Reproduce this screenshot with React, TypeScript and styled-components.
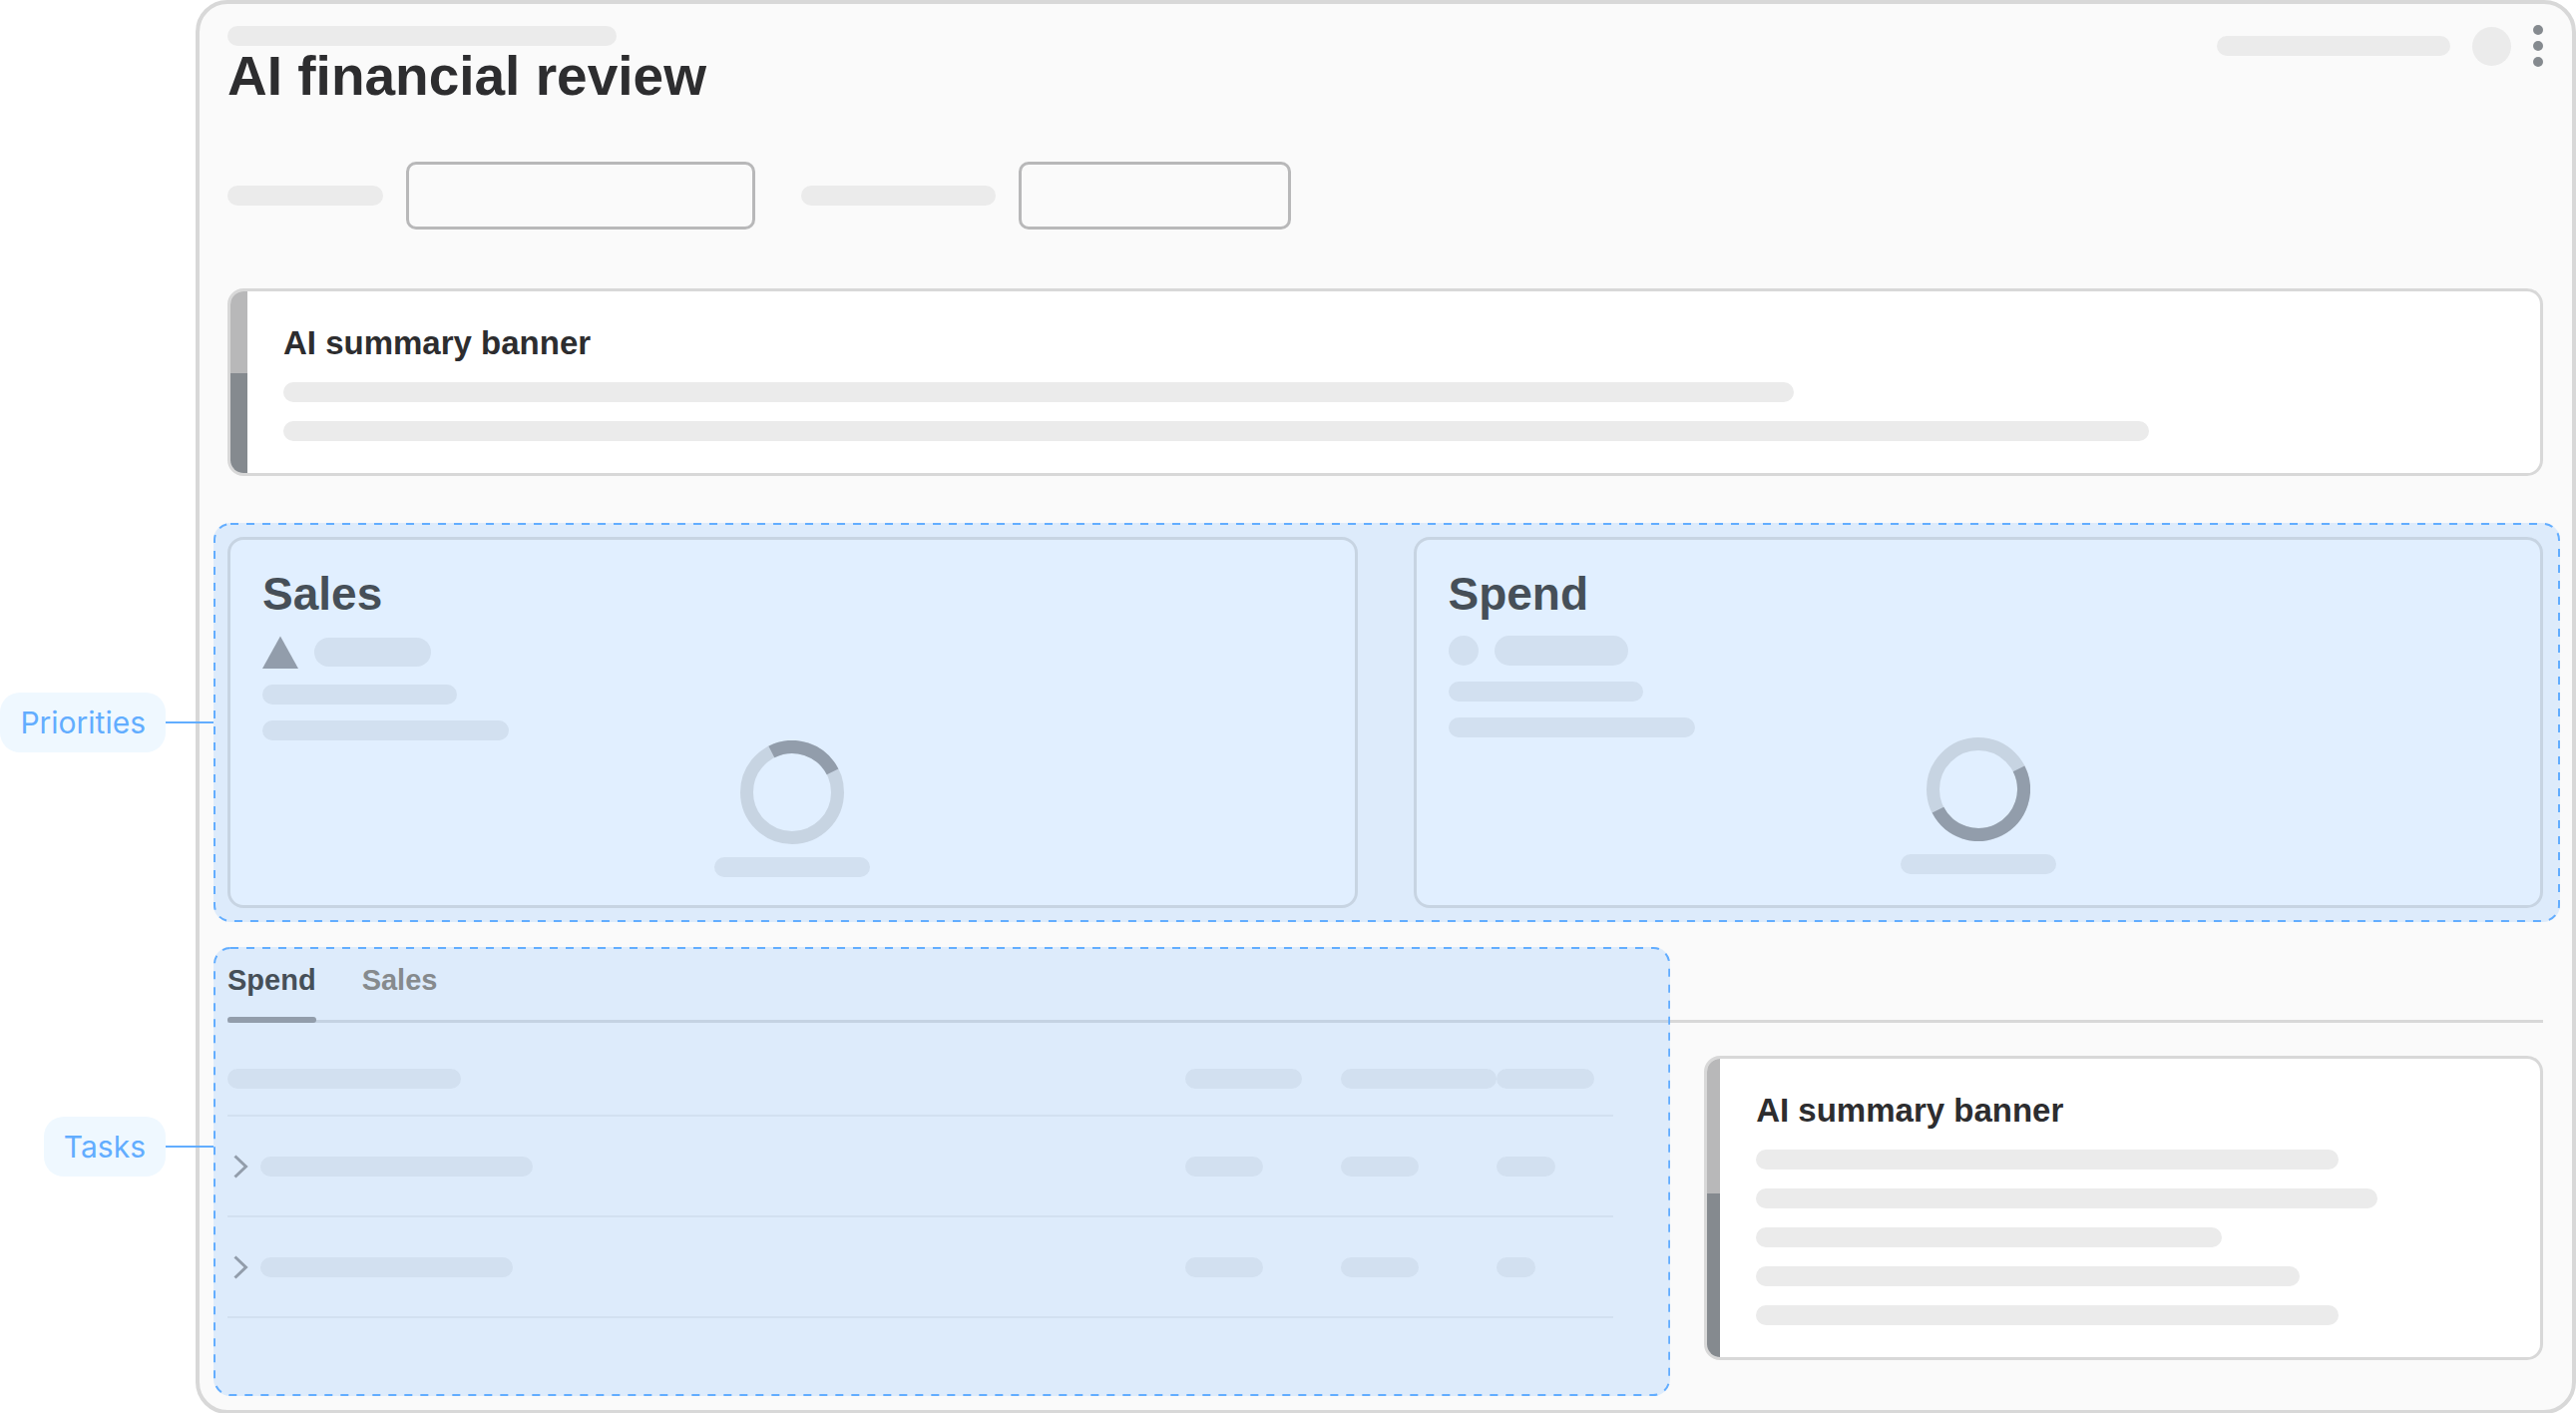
import React, { useState } from "react";
import styled, { createGlobalStyle } from "styled-components";

const color = {
  frame: "#fafafa",
  border: "#d8d8d8",
  field: "#b8b8b9",
  bar: "#ebebeb",
  text: "#2d2d2f",
  strong: "#858a8f",
  warmText: "#302a20",
  warmMark: "#96928f",
  warmLine: "#dddbd9",
  muted: "#867867",
  accent: "#62adff",
  accentSoft: "#eff8ff",
  tint: "rgba(135, 191, 255, 0.25)",
};

const GlobalStyle = createGlobalStyle`
  *, *::before, *::after { box-sizing: border-box; }
  body {
    margin: 0;
    background: #ffffff;
    color: ${color.text};
    font-family: "Liberation Sans", Arial, sans-serif;
  }
  button, input { font: inherit; color: inherit; }
  h1, h2 { margin: 0; font-weight: 700; }
`;

const Page = styled.div`
  padding-left: 196px;
`;

const Frame = styled.main`
  padding: 22px 29px 14px 28px;
  border: 4px solid ${color.border};
  border-radius: 32px;
  background: ${color.frame};
`;

const Bar = styled.span<{ $w: number; $h?: number }>`
  display: block;
  flex: none;
  width: ${(p) => p.$w}px;
  max-width: 100%;
  height: ${(p) => p.$h ?? 20}px;
  border-radius: 16px;
  background: ${color.bar};
`;

const Dot = styled.span<{ $size: number }>`
  flex: none;
  width: ${(p) => p.$size}px;
  height: ${(p) => p.$size}px;
  border-radius: 50%;
  background: ${color.bar};
`;

const Header = styled.header`
  display: flex;
  align-items: flex-start;
  justify-content: space-between;
`;

const PageTitle = styled.h1`
  font-size: 55px;
  line-height: 60px;
`;

const Account = styled.div`
  display: flex;
  align-items: center;
  gap: 22px;
`;

const MenuButton = styled.button`
  display: flex;
  padding: 0;
  border: 0;
  background: none;
  cursor: pointer;
  svg { overflow: visible; fill: ${color.strong}; }
`;

const Filters = styled.form`
  display: flex;
  align-items: center;
  gap: 46px;
  margin-top: 56px;
`;

const Field = styled.label`
  display: flex;
  align-items: center;
  gap: 23px;
`;

const TextBox = styled.input<{ $w: number }>`
  width: ${(p) => p.$w}px;
  height: 68px;
  padding: 0 16px;
  border: 3px solid ${color.field};
  border-radius: 10px;
  background: transparent;
  font-size: 29px;
`;

const Card = styled.section`
  border: 3px solid ${color.border};
  border-radius: 16px;
  background: #ffffff;
`;

const BannerCard = styled(Card)`
  display: flex;
  overflow: hidden;
`;

const Stripe = styled.div<{ $w: number }>`
  flex: none;
  width: ${(p) => p.$w}px;
  background: linear-gradient(${color.field} 45%, ${color.strong} 45%);
`;

const BannerBody = styled.div`
  display: flex;
  flex: 1;
  flex-direction: column;
  gap: 19px;
  min-width: 0;
  padding: 32px 36px;
`;

const BannerTitle = styled.h2`
  font-size: 33px;
  line-height: 40px;
`;

const TopBanner = styled.div`
  margin-top: 59px;
`;

const Priorities = styled.div`
  position: relative;
  display: grid;
  grid-template-columns: 1fr 1fr;
  gap: 56px;
  margin: 47px -17px 0 -14px;
  padding: 14px 17px 14px 14px;
`;

const MetricCard = styled(Card)`
  display: flex;
  flex-direction: column;
  gap: 16px;
  min-height: 372px;
  padding: 28px 32px;
  border-color: ${color.warmLine};
`;

const MetricTitle = styled.h2`
  color: ${color.warmText};
  font-size: 46px;
  line-height: 52px;
`;

const Status = styled.div`
  display: flex;
  align-items: center;
  gap: 16px;
`;

const Chart = styled.div`
  display: flex;
  flex-direction: column;
  align-items: center;
  gap: 13px;
  margin-top: -16px;
`;

const Workspace = styled.div`
  position: relative;
  display: grid;
  grid-template-columns: minmax(0, 1.72fr) minmax(0, 1fr);
  grid-template-rows: auto auto;
  column-gap: 34px;
  margin-top: 25px;
`;

const Tabs = styled.div`
  grid-column: 1 / -1;
  grid-row: 1;
  display: flex;
  gap: 46px;
  padding-top: 15px;
  box-shadow: inset 0 -3px ${color.border};
`;

const Tab = styled.button<{ $active: boolean }>`
  padding: 0;
  border: 0;
  background: none;
  color: ${(p) => (p.$active ? color.warmText : color.muted)};
  font-size: 29px;
  font-weight: 700;
  line-height: 36px;
  cursor: pointer;
  &::after {
    content: "";
    display: block;
    height: 6px;
    margin-top: 19px;
    border-radius: 3px;
    background: ${(p) => (p.$active ? color.warmMark : "transparent")};
  }
`;

const TaskPane = styled.div`
  grid-column: 1;
  grid-row: 2;
  padding: 19px 57px 78px 0;
`;

const TaskTable = styled.table`
  width: 100%;
  table-layout: fixed;
  border-collapse: separate;
  border-spacing: 0;
  th, td {
    height: 101px;
    padding: 0;
    border-bottom: 2px solid ${color.bar};
    vertical-align: middle;
  }
  th { height: 75px; }
`;

const Column = styled.col<{ $w?: number }>`
  width: ${(p) => (p.$w ? `${p.$w}px` : "auto")};
`;

const TaskName = styled.div`
  display: flex;
  align-items: center;
`;

const ExpandButton = styled.button`
  display: flex;
  width: 33px;
  padding: 0 0 0 6px;
  border: 0;
  background: none;
  cursor: pointer;
`;

const Aside = styled.aside`
  grid-column: 2;
  grid-row: 2;
  align-self: start;
  margin-top: 33px;
`;

const RegionCover = styled.div`
  position: absolute;
  inset: 0;
  pointer-events: none;
`;

const TaskCover = styled.div`
  position: relative;
  grid-column: 1;
  grid-row: 1 / 3;
  margin-left: -14px;
  pointer-events: none;
`;

const Outline = styled.svg`
  position: absolute;
  inset: 0;
  width: 100%;
  height: 100%;
  rect {
    x: 1px;
    y: 1px;
    width: calc(100% - 2px);
    height: calc(100% - 2px);
    fill: none;
    stroke: ${color.accent};
    stroke-width: 2;
    stroke-dasharray: 8 8;
  }
`;

const Tint = styled.div`
  position: absolute;
  inset: 0;
  border-radius: 17px;
  background: ${color.tint};
`;

const Callout = styled.div`
  position: absolute;
  top: 170px;
  right: 100%;
  display: flex;
  align-items: center;
  &::after {
    content: "";
    width: 48px;
    height: 2px;
    background: ${color.accent};
  }
`;

const CalloutLabel = styled.span`
  padding: 12px 20px;
  border-radius: 20px;
  background: ${color.accentSoft};
  color: ${color.accent};
  font-family: Inter, "Liberation Sans", sans-serif;
  font-size: 30px;
  line-height: 36px;
`;

function Highlight({ label }: { label: string }) {
  return (
    <>
      <Tint />
      <Outline aria-hidden="true">
        <rect rx="16" />
      </Outline>
      <Callout>
        <CalloutLabel>{label}</CalloutLabel>
      </Callout>
    </>
  );
}

function Banner({ stripe, lines }: { stripe: number; lines: number[] }) {
  return (
    <BannerCard>
      <Stripe $w={stripe} />
      <BannerBody>
        <BannerTitle>AI summary banner</BannerTitle>
        {lines.map((w, i) => (
          <Bar key={i} $w={w} />
        ))}
      </BannerBody>
    </BannerCard>
  );
}

function Ring({ share, start }: { share: number; start: number }) {
  return (
    <svg width="104" height="104" viewBox="0 0 104 104" fill="none" strokeWidth="13" aria-hidden="true">
      <circle cx="52" cy="52" r="45.5" stroke={color.warmLine} />
      <circle
        cx="52"
        cy="52"
        r="45.5"
        stroke={color.warmMark}
        pathLength={100}
        strokeDasharray={`${share} ${100 - share}`}
        transform={`rotate(${start - 90} 52 52)`}
      />
    </svg>
  );
}

function Metric(props: {
  title: string;
  icon: React.ReactNode;
  status: React.ReactNode;
  share: number;
  start: number;
}) {
  return (
    <MetricCard>
      <MetricTitle>{props.title}</MetricTitle>
      <Status>
        {props.icon}
        {props.status}
      </Status>
      <Bar $w={195} />
      <Bar $w={247} />
      <Chart>
        <Ring share={props.share} start={props.start} />
        <Bar $w={156} />
      </Chart>
    </MetricCard>
  );
}

const tasks = [
  { name: 273, cells: [78, 78, 59] },
  { name: 253, cells: [78, 78, 39] },
];

export default function App() {
  const [tab, setTab] = useState("Spend");
  return (
    <>
      <GlobalStyle />
      <Page>
        <Frame>
          <Header>
            <div>
              <Bar $w={390} />
              <PageTitle>AI financial review</PageTitle>
            </div>
            <Account>
              <Bar $w={234} />
              <Dot $size={39} />
              <MenuButton type="button" aria-label="More options">
                <svg width="10" height="40" viewBox="0 0 10 40">
                  <circle cx="5" cy="4" r="5" />
                  <circle cx="5" cy="20" r="5" />
                  <circle cx="5" cy="36" r="5" />
                </svg>
              </MenuButton>
            </Account>
          </Header>

          <Filters>
            <Field>
              <Bar $w={156} />
              <TextBox $w={350} type="text" aria-label="First filter" />
            </Field>
            <Field>
              <Bar $w={195} />
              <TextBox $w={273} type="text" aria-label="Second filter" />
            </Field>
          </Filters>

          <TopBanner>
            <Banner stripe={17} lines={[1514, 1870]} />
          </TopBanner>

          <Priorities>
            <Metric
              title="Sales"
              icon={
                <svg width="36" height="33" viewBox="0 0 36 33" aria-hidden="true">
                  <path d="M18 0.5 36 33H0Z" fill={color.warmMark} />
                </svg>
              }
              status={<Bar $w={117} $h={29} />}
              share={25}
              start={-27}
            />
            <Metric
              title="Spend"
              icon={<Dot $size={30} />}
              status={<Bar $w={134} $h={30} />}
              share={50}
              start={63}
            />
            <RegionCover>
              <Highlight label="Priorities" />
            </RegionCover>
          </Priorities>

          <Workspace>
            <Tabs role="tablist">
              {["Spend", "Sales"].map((name) => (
                <Tab
                  key={name}
                  type="button"
                  role="tab"
                  aria-selected={tab === name}
                  $active={tab === name}
                  onClick={() => setTab(name)}
                >
                  {name}
                </Tab>
              ))}
            </Tabs>
            <TaskPane>
              <TaskTable>
                <colgroup>
                  <Column />
                  <Column $w={156} />
                  <Column $w={156} />
                  <Column $w={117} />
                </colgroup>
                <thead>
                  <tr>
                    {[234, 117, 156, 98].map((w, i) => (
                      <th key={i} scope="col">
                        <Bar $w={w} />
                      </th>
                    ))}
                  </tr>
                </thead>
                <tbody>
                  {tasks.map((task, i) => (
                    <tr key={i}>
                      <td>
                        <TaskName>
                          <ExpandButton type="button" aria-label="Expand task">
                            <svg width="15" height="24" viewBox="0 0 15 24" fill="none" aria-hidden="true">
                              <path d="M1.5 1.5 12.5 12 1.5 22.5" stroke={color.warmMark} strokeWidth="3" />
                            </svg>
                          </ExpandButton>
                          <Bar $w={task.name} />
                        </TaskName>
                      </td>
                      {task.cells.map((w, j) => (
                        <td key={j}>
                          <Bar $w={w} />
                        </td>
                      ))}
                    </tr>
                  ))}
                </tbody>
              </TaskTable>
            </TaskPane>
            <Aside>
              <Banner stripe={13} lines={[584, 623, 467, 545, 584]} />
            </Aside>
            <TaskCover>
              <Highlight label="Tasks" />
            </TaskCover>
          </Workspace>
        </Frame>
      </Page>
    </>
  );
}
